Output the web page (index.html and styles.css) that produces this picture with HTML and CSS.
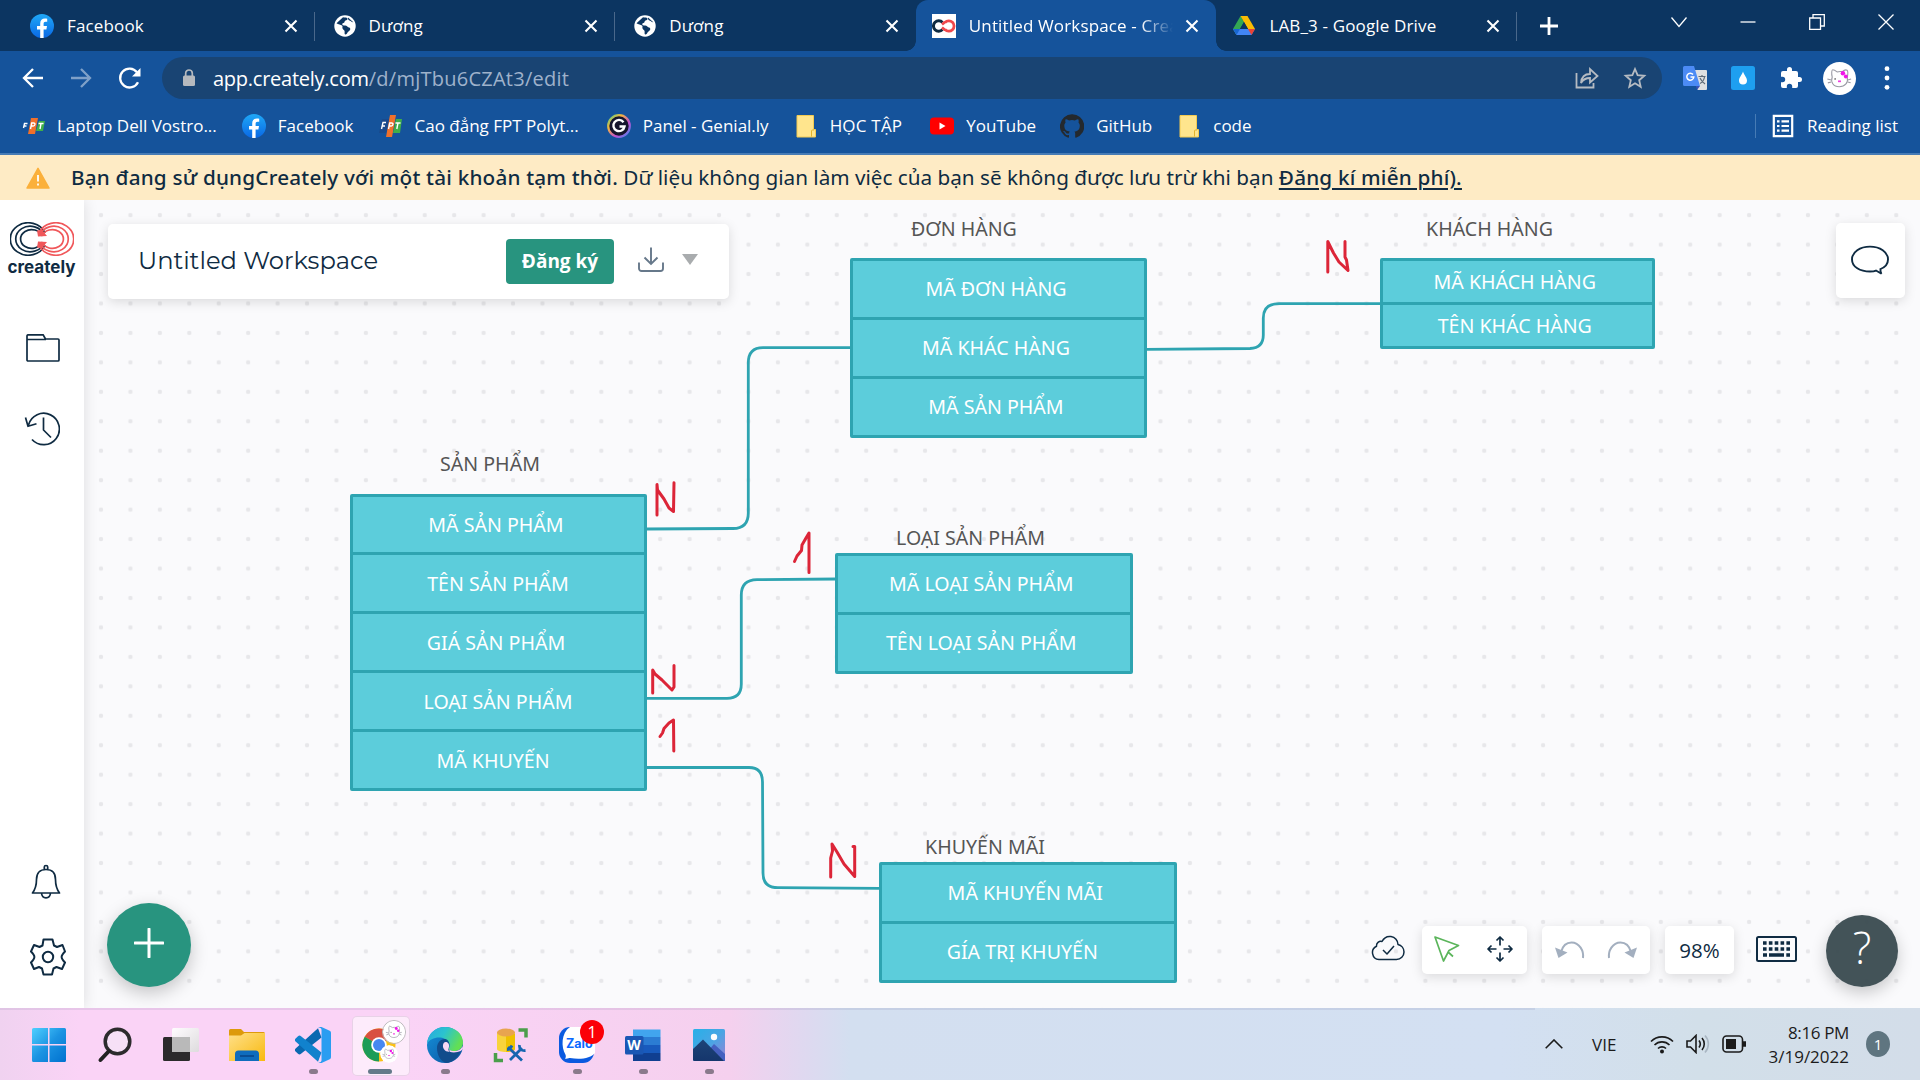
FILE: index.html
```html
<!DOCTYPE html>
<html lang="vi">
<head>
<meta charset="utf-8">
<title>Untitled Workspace - Creately</title>
<link rel="stylesheet" href="styles.css">
</head>
<body>
<svg class="defs" width="0" height="0">
  <defs>
    <linearGradient id="fbg" x1="0" y1="0" x2="0" y2="1"><stop offset="0" stop-color="#1fa8f7"/><stop offset="1" stop-color="#0a68e4"/></linearGradient>
    <linearGradient id="wing" x1="0" y1="0" x2="1" y2="1"><stop offset="0" stop-color="#4fd0ff"/><stop offset=".5" stop-color="#1b93e2"/><stop offset="1" stop-color="#0071cf"/></linearGradient>
    <linearGradient id="rainbow" x1="0" y1="0" x2="1" y2="1"><stop offset="0" stop-color="#4fd08a"/><stop offset=".3" stop-color="#f3b63c"/><stop offset=".65" stop-color="#c04fd0"/><stop offset="1" stop-color="#3e8ef0"/></linearGradient>
    <linearGradient id="foldg" x1="0" y1="0" x2="1" y2="1"><stop offset="0" stop-color="#ffe08a"/><stop offset="1" stop-color="#f8b90f"/></linearGradient>
    <linearGradient id="edgeTop" x1="0" y1="0" x2="1" y2=".4"><stop offset="0" stop-color="#2aa7e0"/><stop offset=".5" stop-color="#2bc3cf"/><stop offset="1" stop-color="#62df55"/></linearGradient>
    <linearGradient id="edgeLow" x1="0" y1="0" x2="1" y2="1"><stop offset="0" stop-color="#1593dc"/><stop offset="1" stop-color="#0c4f9c"/></linearGradient>
    <linearGradient id="skyg" x1="0" y1="0" x2="1" y2="1"><stop offset="0" stop-color="#27b0e8"/><stop offset=".5" stop-color="#4aa5e4"/><stop offset="1" stop-color="#9a7fd6"/></linearGradient>
    <linearGradient id="hillg" x1="0" y1="0" x2="0" y2="1"><stop offset="0" stop-color="#1d4478"/><stop offset="1" stop-color="#15366c"/></linearGradient>
    <linearGradient id="tvg" x1="0" y1="0" x2="1" y2="1"><stop offset="0" stop-color="#fff"/><stop offset="1" stop-color="#dcdcdc"/></linearGradient>
    <symbol id="i-close" viewBox="0 0 14 14"><path d="M1.500 1.500l11 11M12.500 1.500l-11 11" stroke="#fff" stroke-width="2.100" fill="none"/></symbol>
    <symbol id="i-fb" viewBox="0 0 24 24"><circle cx="12" cy="12" r="12" fill="url(#fbg)"/><path d="M10.200 24v-8.400H7V12h3.200V9.400c0-3.200 1.900-4.900 4.700-4.900.9 0 1.800.1 2.300.2v3.100h-1.600c-1.500 0-2 .9-2 1.900V12h3.400l-.6 3.600h-2.800V24z" fill="#fff"/></symbol>
    <symbol id="i-globe" viewBox="0 0 22 22"><circle cx="11" cy="11" r="10.700" fill="#fff"/><path d="M9 2.200c1 .2 4 .2 4.500 1.200.4 1-.8 1.600-2 2.100-1.300.6-.6 2.300-2.200 2.600-1.500.3-1.300 1.800-.3 2.200 1 .3 3.300-.1 4.300 1.100 1 1.100 3 .9 3 2.500s-1.800 2.100-2.400 3.200c-.6 1.200-1.500 2.600-2.700 2.400-1-.2-.4-2-.6-3.200-.2-1.400-2-1.700-2.200-3.200-.2-1.300.6-1.600-.4-2.500-1.200-1-3.700-.9-5.500-2.300M14 2.500c-.4 1.500.4 3 2 3.300 1 .2 1.500 1.700 3.300 1.500" fill="#0c3561"/></symbol>
    <symbol id="i-folder" viewBox="0 0 24 24"><path d="M3 1.500h16.500v14h2V23H3z" fill="#ffe58d" stroke="#f3cb52" stroke-width="1"/><path d="M17.500 22.500v-5.500a1 1 0 0 1 1-1h1.500" fill="none" stroke="#e3b32c" stroke-width="1"/></symbol>
    <symbol id="i-kitty" viewBox="0 0 34 34"><circle cx="17" cy="17" r="17" fill="#fff"/><g fill="none" stroke="#9a9aa4" stroke-width="1.100"><path d="M9.500 15.500c-1-4-.5-7.500.5-7.500 1.500 0 3 1 4.500 2.200 2-.5 4-.5 5.500-.2 1.500-1.500 3.500-2.300 4.800-1.500 1.200 1 .7 5 .2 7.500 1.200 5-2 9.500-8.300 9.500s-9-5-7.200-10z"/><path d="M4.500 17.500l4 1M5 21.500l3.500-1M29 17.500l-3.500 1M28.500 21.500l-3-1"/></g><circle cx="20.500" cy="11.500" r="2.300" fill="#f015e8"/><circle cx="23.500" cy="15" r="2" fill="#f015e8"/><rect x="15.500" y="19" width="3" height="1.800" fill="#f03ae0"/><circle cx="12.500" cy="17.500" r=".9" fill="#777"/></symbol>
  </defs>
</svg>

<header class="tabstrip">
  <div class="tab sep"><svg class="fav"><use href="#i-fb"/></svg><span class="tab-title">Facebook</span><svg class="x"><use href="#i-close"/></svg></div>
  <div class="tab sep"><svg class="fav globe"><use href="#i-globe"/></svg><span class="tab-title">Dương</span><svg class="x"><use href="#i-close"/></svg></div>
  <div class="tab"><svg class="fav globe"><use href="#i-globe"/></svg><span class="tab-title">Dương</span><svg class="x"><use href="#i-close"/></svg></div>
  <div class="tab active">
    <svg class="fav" viewBox="0 0 24 24"><rect width="24" height="24" fill="#fff"/><path d="M10.500 8.500A5.200 5.200 0 1 0 10.500 15.500" fill="none" stroke="#0f2b42" stroke-width="3"/><path d="M13 8.500a5.200 5.200 0 1 1 0 7M10 10.500l3-2.500M10 13.500l3 2.500" fill="none" stroke="#f0484c" stroke-width="2.800"/></svg>
    <span class="tab-title fade">Untitled Workspace - Creately</span><svg class="x"><use href="#i-close"/></svg></div>
  <div class="tab sep"><svg class="fav" viewBox="0 0 24 24"><path d="M8.500 2h7L12 8z" fill="#188038"/><path d="M8.500 2L1 15l3.500 6L12 8z" fill="#34a853"/><path d="M15.500 2h-7L16 15h7z" fill="#fbbc04"/><path d="M1 15h22l-3.500 6H4.500z" fill="#4285f4"/><path d="M16 15h7l-3.500 6z" fill="#ea4335"/><path d="M1 15h7l-3.500 6z" fill="#1967d2"/><path d="M12 8l4 7H8z" fill="#0c3561"/></svg><span class="tab-title">LAB_3 - Google Drive</span><svg class="x"><use href="#i-close"/></svg></div>
  <svg class="newtab" viewBox="0 0 18 18"><path d="M9 0v18M0 9h18" stroke="#fff" stroke-width="2.800"/></svg>
  <div class="winctl">
    <svg viewBox="0 0 16 16"><path d="M.5 3.500L8 12.500l7.500-9"/></svg>
    <svg viewBox="0 0 16 16"><path d="M.5 8h15"/></svg>
    <svg viewBox="0 0 16 16"><path d="M.7 4h10.800v11.300H.7zM4 4V.7h11.300V12h-3.600"/></svg>
    <svg viewBox="0 0 16 16"><path d="M.5.5l15 15M15.500.5l-15 15"/></svg>
  </div>
</header>

<section class="browserbar">
  <div class="toolbar">
    <svg class="nav" viewBox="0 0 24 24"><path d="M22 12H3M12 3l-9 9 9 9"/></svg>
    <svg class="nav dim" viewBox="0 0 24 24"><path d="M2 12h19M12 3l9 9-9 9"/></svg>
    <svg class="nav reload" viewBox="0 0 24 24"><path d="M20 16.200A9.400 9.400 0 1 1 19 6.300"/><path d="M22.500 2v8.500H14z" fill="#fff" stroke="none"/></svg>
    <div class="omnibox">
      <svg class="lock" viewBox="0 0 14 18"><rect x="1" y="6.500" width="12" height="10.500" rx="1.500" fill="#b5b9be"/><path d="M3.700 7V4.300a3.300 3.300 0 0 1 6.600 0V7" fill="none" stroke="#b5b9be" stroke-width="1.700"/></svg>
      <span class="url"><b>app.creately.com</b>/d/mjTbu6CZAt3/edit</span>
      <svg class="omni-icon" viewBox="0 0 24 24"><path d="M1.500 7v14.500h17V17M6 17c.5-6 3.500-9 9-9V3l7.500 7L15 16.500V12c-4 0-7 1.500-9 5z"/></svg>
      <svg class="omni-icon" viewBox="0 0 24 24"><path d="M12 3l2.600 6.200 6.700.6-5.100 4.400 1.500 6.600-5.700-3.500-5.700 3.500 1.500-6.600-5.100-4.400 6.700-.6z"/></svg>
    </div>
    <svg class="ext" viewBox="0 0 24 24"><path d="M11 4h12a1 1 0 0 1 1 1v18a1 1 0 0 1-1 1h-8.500z" fill="#dfe0e2"/><path d="M0 1.500A1.500 1.500 0 0 1 1.500 0H11l6 20H1.500A1.500 1.500 0 0 1 0 18.500z" fill="#4c8bf5"/><path d="M13 20h4l-3 4z" fill="#3a52b8"/><path d="M10 8.400A3.500 3.500 0 1 0 10.800 11H7.500" fill="none" stroke="#fff" stroke-width="1.500"/><path d="M15.500 10.500h7M19 9v1.500M21.500 11c-.5 3-2.500 5.500-4.500 6.500M17 12c1 2.500 2.500 4 5 6" fill="none" stroke="#5f6b78" stroke-width="1.200"/></svg>
    <svg class="ext" viewBox="0 0 24 24"><rect width="24" height="24" rx="2.500" fill="#1e9ff0"/><path d="M12 5.500c1 3.500 4 6 4 9a4 4 0 0 1-8 0c0-3 3-5.500 4-9z" fill="#fff"/></svg>
    <svg class="ext" viewBox="0 0 24 24"><path d="M20.500 11H19V7a2 2 0 0 0-2-2h-4V3.500a2.500 2.500 0 0 0-5 0V5H4a2 2 0 0 0-2 2v3.800h1.500a2.700 2.700 0 0 1 0 5.400H2V20a2 2 0 0 0 2 2h3.800v-1.500a2.700 2.700 0 0 1 5.400 0V22H17a2 2 0 0 0 2-2v-4h1.500a2.500 2.500 0 0 0 0-5z" fill="#fff"/></svg>
    <svg class="avatar"><use href="#i-kitty"/></svg>
    <svg class="menu" viewBox="0 0 6 24"><circle cx="3" cy="2.700" r="2.400"/><circle cx="3" cy="12" r="2.400"/><circle cx="3" cy="21.300" r="2.400"/></svg>
  </div>
  <nav class="bookmarks">
    <a><svg viewBox="0 0 24 24"><path d="M3 7h6l-2 11H0z" fill="#12529c"/><path d="M10 4h7l-3 16H7z" fill="#f0702a"/><path d="M18 7h6l-2 10h-7z" fill="#3fae49"/><path d="M2.500 14l1-4.500h3M3 12h2.500M9.500 15l1.200-6h2c2 0 1.500 3-.5 3h-2M17.500 9.500h5M20 9.500L19 15" stroke="#fff" stroke-width="1.400" fill="none"/></svg><span>Laptop Dell Vostro...</span></a>
    <a><svg><use href="#i-fb"/></svg><span>Facebook</span></a>
    <a><svg viewBox="0 0 24 24"><path d="M3 5h7L7 19H0z" fill="#1a4a8c"/><path d="M11 1h6l-4 22H7z" fill="#f0702a"/><path d="M17 5h6l-2 14h-7z" fill="#3fae49"/><path d="M2.500 15l1.500-6.500h3M3 12h3M9.500 15l1.200-6h2c2 0 1.500 3-.5 3h-2M16.500 9h5M19 9l-1.200 6" stroke="#fff" stroke-width="1.400" fill="none"/></svg><span>Cao đẳng FPT Polyt...</span></a>
    <a class="genially"><svg viewBox="0 0 24 24"><circle cx="12" cy="12" r="10.800" fill="#15142c" stroke="url(#rainbow)" stroke-width="2.200"/><path d="M16.500 8.200A5.600 5.600 0 1 0 17.500 12.500H12.500" fill="none" stroke="#fff" stroke-width="2.400"/></svg><span>Panel - Genial.ly</span></a>
    <a class="study"><svg><use href="#i-folder"/></svg><span>HỌC TẬP</span></a>
    <a><svg viewBox="0 0 24 24"><rect y="3.500" width="24" height="17" rx="4" fill="#f00"/><path d="M9.500 8.500v7l6-3.500z" fill="#fff"/></svg><span>YouTube</span></a>
    <a class="github"><svg viewBox="0 0 24 24"><path d="M12 .3a12 12 0 0 0-3.800 23.400c.6.1.8-.3.8-.6v-2c-3.300.7-4-1.600-4-1.600-.6-1.400-1.400-1.800-1.400-1.800-1-.7.1-.7.1-.7 1.200 0 1.900 1.200 1.900 1.200 1 1.800 2.800 1.300 3.500 1 0-.8.4-1.300.7-1.600-2.700-.3-5.500-1.300-5.500-6 0-1.200.5-2.300 1.300-3.100-.2-.4-.6-1.600 0-3.200 0 0 1-.3 3.400 1.200a11.500 11.500 0 0 1 6 0c2.300-1.500 3.300-1.200 3.300-1.200.7 1.600.3 2.800.2 3.200.8.8 1.300 1.900 1.300 3.200 0 4.600-2.800 5.600-5.500 5.900.5.400.9 1 .9 2.200v3.300c0 .3.1.7.8.6A12 12 0 0 0 12 .3" fill="#24292e"/></svg><span>GitHub</span></a>
    <a><svg><use href="#i-folder"/></svg><span>code</span></a>
    <a class="reading"><svg viewBox="0 0 24 24"><path d="M2.800 1.800h18.400v20.400H2.800z" fill="none" stroke="#fff" stroke-width="2.200"/><path d="M6 7.300h2.500M10.500 7.300H18M6 12h2.500M10.500 12H18M6 16.700h2.500M10.500 16.700H18" stroke="#fff" stroke-width="2.200"/></svg><span>Reading list</span></a>
  </nav>
</section>

<div class="banner">
  <svg viewBox="0 0 24 22"><path d="M12 1.300L23 21H1z" fill="#fbb03b" stroke="#fbb03b" stroke-width="1.500" stroke-linejoin="round"/><path d="M12 8v6.500M12 16.500v2" stroke="#fff" stroke-width="1.800"/></svg>
  <p><b>Bạn đang sử dụngCreately với một tài khoản tạm thời.</b> Dữ liệu không gian làm việc của bạn sẽ không được lưu trừ khi bạn <u>Đăng kí miễn phí).</u></p>
</div>

<main class="workspace">
  <aside class="sidebar">
    <div class="logo">
      <svg viewBox="0 0 64 34"><g fill="none" stroke="#0f2b42" stroke-width="1.700"><path d="M35 11A18 16.200 0 1 0 35 23"/><path d="M34 13A14.500 12.800 0 1 0 34 21"/><path d="M32 14A11 9.400 0 1 0 32 20"/></g><g fill="none" stroke="#f0575a" stroke-width="1.700"><path d="M29 11A18 16.200 0 1 1 29 23"/><path d="M30 13A14.500 12.800 0 1 1 30 21"/><path d="M32 14A11 9.400 0 1 1 32 20"/></g><path d="M27 8.500l1 6 9-.5-5-6zM27 25.500l1-6 9 .5-5 6z" fill="#f0575a"/></svg>
      <span>creately</span>
    </div>
    <svg class="s-folder" viewBox="0 0 34 28"><path d="M1 5.500V2a1.200 1.200 0 0 1 1.200-1.200h15L19.500 5H32a1 1 0 0 1 1 1v20a1 1 0 0 1-1 1H2a1 1 0 0 1-1-1zM1 5.500h19"/></svg>
    <svg class="s-history" viewBox="0 0 36 34"><path d="M4.500 13A15.700 15.700 0 1 1 8 27.500M1.500 5.500L4 14.300l8.500-2.500M19.500 5.500V18l7.500 7.500"/></svg>
    <svg class="s-bell" viewBox="0 0 30 36"><path d="M1.500 29c3-4 4-8 4-13.500C5.500 9 9 5.500 15 5.500S24.500 9 24.500 15.500c0 5.500 1 9.500 4 13.500zM13.300 5.500V3c0-2 3.400-2 3.400 0v2.500M10.500 29c.5 6.500 8.500 6.500 9 0"/></svg>
    <svg class="s-gear" viewBox="0 0 36 38"><path d="M13.500 1.500h9l1.500 6 3 1.500 5.500-2L35 13.500c-4.500 4.500-4.500 6.500 0 11L32 31l-5.500-2-3 1.500-1.500 6h-8.500l-1.500-6-3-1.500L4 31 1 24.500c4.500-4.500 4.500-6.500 0-11L4 7l5.500 2 3-1.500z"/><circle cx="18" cy="19" r="5.200"/></svg>
  </aside>

  <div class="canvas">
    <svg class="layer" viewBox="84 200 1836 808">
      <defs><pattern id="dots" x="86.300" y="200.400" width="29.430" height="29.450" patternUnits="userSpaceOnUse"><circle cx="14.700" cy="14.700" r="2.200" fill="#e7e7ea"/></pattern></defs>
      <rect x="84" y="200" width="1836" height="808" fill="url(#dots)"/>
      <g class="wires">
        <path d="M646 529L733 528.500Q748.300 528.500 748.300 513V363Q748.300 347.700 763 347.700H852"/>
        <path d="M646 698.300H727Q741.300 698.300 741.300 684V595Q741.300 580 757 579.700L837 579"/>
        <path d="M644 767.500H749Q762.500 767.500 762.500 782L763 873Q763 887.700 778 887.700L880 888.300"/>
        <path d="M1146 349.300L1250 348.500Q1263.300 348 1263.300 335V318Q1263.300 303.600 1279 303.600H1380"/>
      </g>
    </svg>

    <h4 class="label l-don">ĐƠN HÀNG</h4>
    <ul class="node n-don"><li>MÃ ĐƠN HÀNG</li><li>MÃ KHÁC HÀNG</li><li>MÃ SẢN PHẨM</li></ul>
    <h4 class="label l-khach">KHÁCH HÀNG</h4>
    <ul class="node n-khach"><li>MÃ KHÁCH HÀNG</li><li>TÊN KHÁC HÀNG</li></ul>
    <h4 class="label l-san">SẢN PHẨM</h4>
    <ul class="node n-san"><li>MÃ SẢN PHẨM</li><li class="mid">TÊN SẢN PHẨM</li><li>GIÁ SẢN PHẨM</li><li class="mid">LOẠI SẢN PHẨM</li><li class="trail">MÃ KHUYẾN</li></ul>
    <h4 class="label l-loai">LOẠI SẢN PHẨM</h4>
    <ul class="node n-loai"><li>MÃ LOẠI SẢN PHẨM</li><li>TÊN LOẠI SẢN PHẨM</li></ul>
    <h4 class="label l-khuyen">KHUYẾN MÃI</h4>
    <ul class="node n-khuyen"><li>MÃ KHUYẾN MÃI</li><li class="trail">GÍA TRỊ KHUYẾN</li></ul>

    <!-- freehand ink strokes -->
    <svg class="layer ink" viewBox="84 200 1836 808">
      <polyline points="657,515 657,484.500 657.500,490 664,499 669,508 673.500,511.500 674,482.700"/>
      <polyline points="794.500,561.500 797,556 801.500,550.500 802,545 806,538 809,533 809,572.500"/>
      <polyline points="652.700,693 652.700,670 655,674 662,680 672,690 674,687 674,665.500"/>
      <polyline points="660,736.500 662.500,733 664,728.500 669,723 673.500,720 673.800,751"/>
      <polyline points="1327.800,272 1327.800,241.500 1330,246 1333.500,253 1339,262 1348,270.500 1346.500,260 1345,257 1345,241.500"/>
      <polyline points="830.700,877 830.700,858 832.500,851 832,844 837,852 844,864 854.700,876.500 854.700,846.500 853,846.500"/>
    </svg>

    <div class="card title-card">
      <span class="ws-title">Untitled Workspace</span>
      <button class="signup">Đăng ký</button>
      <svg class="download" viewBox="0 0 26 25"><path d="M13 .5v16M6.500 10.500l6.500 6.500 6.500-6.500M1 15.500v6A2.500 2.500 0 0 0 3.500 24h19a2.500 2.500 0 0 0 2.500-2.500v-6"/></svg>
      <svg class="caret" viewBox="0 0 16 11"><path d="M0 0h16L8 11z" fill="#a9acae"/></svg>
    </div>
    <div class="card comment-card"><svg viewBox="0 0 38 30"><path d="M29.500 25.500C34 23.500 37 20 37 15.300 37 7.500 29 1.800 19 1.800S1 7.500 1 15.300 9 28.200 19 28.200c2 0 4.500-.3 6-1l5.500 3.300c-1-1.500-1.200-3-1-5z" transform="scale(1 .94)"/></svg></div>
    <button class="fab"><svg viewBox="0 0 30 30"><path d="M15 1v28M1 15h28"/></svg></button>

    <div class="controls">
      <svg class="cloud" viewBox="0 0 34 26"><path d="M8 24.500a7 7 0 0 1-2.500-13.300c-.3-3 2.500-5.500 5.500-4.700C13 2.500 16.500 1 20 1.500c4 .5 7 4 7 8 3.500.8 6 4 6 7.500 0 4-3.300 7.500-7.500 7.500zM12 15l4 4 7-8"/></svg>
      <div class="card tools">
        <svg class="cursor" viewBox="0 0 26 26"><path d="M1 1l23.500 8.500L15 14.500 9.500 25zM13.500 15.500l5.500 5"/></svg>
        <svg class="move" viewBox="0 0 26 26"><path d="M13 9.500V1M9.500 4.500L13 1l3.500 3.500M13 16.500V25M9.500 21.500L13 25l3.500-3.500M9.500 13H1M4.500 9.500L1 13l3.500 3.500M16.500 13H25M21.500 9.500L25 13l-3.500 3.500"/></svg>
      </div>
      <div class="card history">
        <svg viewBox="0 0 30 18"><path d="M28 17c1-7-3.500-15.500-11.500-15.500C11 1.500 7.500 5.500 6 11"/><path class="fill" d="M0 6.500l12.500 5L3.500 17z"/></svg>
        <svg viewBox="0 0 30 18"><path d="M2 17C1 10 5.500 1.500 13.500 1.500 19 1.500 22.500 5.500 24 11"/><path class="fill" d="M30 6.500l-12.500 5 9 5.500z"/></svg>
      </div>
      <div class="card zoomlevel">98%</div>
      <svg class="kbd" viewBox="0 0 41 26"><rect x="1" y="1" width="39" height="24" rx="1.500" fill="none" stroke="#0f2b42" stroke-width="2"/><g stroke="#0f2b42" stroke-width="3.600"><path d="M7 7h27M7 13h27" stroke-dasharray="3.600 2.250"/><path d="M7 19h4M13 19h15M30.300 19H34"/></g></svg>
      <div class="help"><span>?</span></div>
    </div>
  </div>
</main>

<footer class="taskbar">
  <div class="apps">
    <div class="app"><svg viewBox="0 0 36 36"><path d="M1 2.500A1.500 1.500 0 0 1 2.500 1H17v16H1zM18.500 1h15A1.500 1.500 0 0 1 35 2.500V17H18.500zM1 18.500h16V35H2.500A1.500 1.500 0 0 1 1 33.500zM18.500 18.500H35v15a1.500 1.500 0 0 1-1.500 1.500h-15z" fill="url(#wing)"/></svg></div>
    <div class="app"><svg viewBox="0 0 36 36"><circle cx="20.500" cy="14.500" r="12.300" fill="#f6e0f6" stroke="#2c2b2d" stroke-width="3.500"/><path d="M12 24l-8.500 9" stroke="#222" stroke-width="4" stroke-linecap="round"/></svg></div>
    <div class="app"><svg viewBox="0 0 36 36"><rect y="10" width="27" height="24" rx="1.500" fill="#2b2a2b"/><rect x="9" y="1" width="27" height="24" rx="1.500" fill="url(#tvg)" opacity=".94"/><path d="M9 10h18v15H9z" fill="#b9b9b9"/></svg></div>
    <div class="app"><svg viewBox="0 0 36 36"><path d="M0 3.500A1.500 1.500 0 0 1 1.500 2H12l3 3h19.500A1.500 1.500 0 0 1 36 6.500V12H0z" fill="#dd9a0b"/><path d="M0 8.500h12L15.500 6H36v28H0z" fill="url(#foldg)"/><path d="M6 34V27a3.500 3.500 0 0 1 3.500-3.500h17A3.500 3.500 0 0 1 30 27v7z" fill="#0f6cbd"/><path d="M11 29h14" stroke="#0a4a90" stroke-width="1.800"/></svg></div>
    <div class="app run"><svg viewBox="0 0 36 36"><path d="M.6 21.500L23 1.200l3.500 9.300L6 26.800a2.200 2.200 0 0 1-3 0L.6 24.600a2.200 2.200 0 0 1 0-3.100z" fill="#0a68b0"/><path d="M.6 14.500L23 34.800l3.500-9.300L6 9.200a2.200 2.200 0 0 0-3 0L.6 11.400a2.200 2.200 0 0 0 0 3.100z" fill="#1182cd"/><path d="M26.500 0l8.200 3.800A2.200 2.200 0 0 1 36 5.800v24.400a2.200 2.200 0 0 1-1.300 2L26.500 36c-1.500.3-2.600-.2-3.500-1.200 1.500 1.200 3.500.2 3.500-1.600V2.800C26.500 1 24.500 0 23 1.200c.9-1 2-1.500 3.500-1.200z" fill="#2a9df1"/></svg></div>
    <div class="app run current"><svg viewBox="0 0 36 36"><circle cx="18" cy="18" r="16.500" fill="#fbc116"/><path d="M18 18L3.700 9.700A16.500 16.500 0 0 1 32.300 9.700z" fill="#d94f41"/><path d="M18 18L3.700 9.700A16.500 16.500 0 0 0 18 34.500z" fill="#1c9c58"/><circle cx="18" cy="18" r="7.800" fill="#fff"/><circle cx="18" cy="18" r="6" fill="#4688f1"/></svg><svg class="kit a"><use href="#i-kitty"/></svg><svg class="kit b"><use href="#i-kitty"/></svg></div>
    <div class="app run"><svg viewBox="0 0 36 36"><circle cx="18" cy="18" r="18" fill="url(#edgeLow)"/><path d="M0 17C1 6 8.500 0 18 0c10.500 0 18 7 18 15.500 0 6-4.500 8.500-9 8.500-4 0-6-1.500-5-3 1.500-2 1-6.500-4-9C12 9 3 11 0 17z" fill="url(#edgeTop)"/><path d="M10 21c0-5.500 4-9.500 8.500-9 3 1 4.500 4 3.500 8-1 3 1 5 5 5 3 0 5.500-1 6.700-1.500C31 31 25 36 19 36 13 34 10 27.500 10 21z" fill="#114c8c"/><path d="M16 18c.5-3 3-4 5.500-1.500.9 1.500.7 3.500.2 4.500-.8 1.800 0 3 .8 3.700C18 25 15.500 21.500 16 18z" fill="#f9d8f5"/><path d="M22 21c-.6 1.500 1.500 3 5 3 4.500 0 7.500-2 8.500-5l.5 3-2.300 2c-3 1.500-8 2-11 .8z" fill="#f9d3f3"/></svg></div>
    <div class="app"><svg viewBox="0 0 36 36"><path d="M4 5v17c0 4 18 4 18 0V5z" fill="#f8d33c"/><path d="M13 7h9v15c0 1.500-4 3-9 3z" fill="#efc100"/><ellipse cx="13" cy="5.500" rx="9" ry="4" fill="#e8a44f"/><path d="M25.500 3H33v7.500M10 33.500H2.500V26" fill="none" stroke="#4b9e4b" stroke-width="3.500"/><path d="M15 20l14 13.500M17 33l12-12M14 22.500c2 0 4-2 5-4M26.500 18c-.5 4 2 6 6 5.500" fill="none" stroke="#1565b0" stroke-width="2.800"/></svg></div>
    <div class="app run"><svg viewBox="0 0 36 36"><rect width="35" height="36" rx="11" fill="#0a5ae0"/><path d="M11 0h17a8 8 0 0 1 8 8v18c-4 5-14 7-25 5-1.500-.3-3 .8-5 .8 1-1.500 1-2.500.5-4C2 20 2 6 11 0z" fill="#fff"/><text x="7" y="21" class="zalo">Zalo</text></svg><span class="badge">1</span></div>
    <div class="app run"><svg viewBox="0 0 36 36"><path d="M8 2.500h27.500V10H8z" fill="#41a5ee"/><path d="M8 10h27.500v8H8z" fill="#2b7cd3"/><path d="M8 18h27.500v8H8z" fill="#185abd"/><path d="M8 26h27.500v8H8z" fill="#103f91"/><rect y="9" width="18.500" height="18.500" rx="1.500" fill="#1a57b4"/><text x="2.300" y="23.300" class="word">W</text></svg></div>
    <div class="app run"><svg viewBox="0 0 36 36"><rect x="2" y="2" width="32" height="32" rx="1.500" fill="url(#skyg)"/><path d="M16 25l7-8 11 10v7H16z" fill="#4560c0"/><path d="M2 22L12 12.500 33 34H3.500A1.500 1.500 0 0 1 2 32.500z" fill="url(#hillg)"/><circle cx="23" cy="10" r="3.200" fill="#fdfdfd"/></svg></div>
  </div>
  <div class="tray">
    <svg class="up" viewBox="0 0 18 10"><path d="M.7 9.300L9 1l8.300 8.300"/></svg>
    <span class="lang">VIE</span>
    <svg class="ti" viewBox="0 0 24 20"><path d="M1 7.500a15.500 15.500 0 0 1 22 0M4.500 11a10.600 10.600 0 0 1 15 0M8 14.500a5.700 5.700 0 0 1 8 0"/><circle cx="12" cy="17.500" r="2" fill="#1b1b1b" stroke="none"/></svg>
    <svg class="ti" viewBox="0 0 24 20"><path d="M1 7h3.500L10 1.500v17L4.500 13H1zM13 6.500c1.500 2 1.500 5 0 7M16 4c3 3.500 3 8.500 0 12"/><path d="M19 1.500c4.500 5 4.500 12 0 17" stroke="#a9b6c2"/></svg>
    <svg class="ti" viewBox="0 0 24 20"><rect x="1" y="2" width="19.500" height="16" rx="3.500"/><rect x="4" y="5" width="10" height="10" fill="#1b1b1b" stroke="none"/><path d="M21.500 8v4h2V8z" fill="#1b1b1b"/></svg>
    <div class="clock"><span class="time">8:16 PM</span><span>3/19/2022</span></div>
    <span class="notif">1</span>
  </div>
</footer>
</body>
</html>
```
FILE: styles.css
```css
* { box-sizing: border-box; }
body {
  margin: 0;
  width: 1920px;
  height: 1080px;
  overflow: hidden;
  display: grid;
  grid-template-rows: 51px 104px 45px 808px 72px;
  font-family: "Open Sans", "Noto Sans", sans-serif;
  color: #0f2b42;
  background: #fafafc;
}
svg { display: block; flex: none; }
.defs { position: absolute; }
button { border: 0; padding: 0; font: inherit; }

/* tab strip */
.tabstrip { display: flex; background: #0c3561; padding-left: 14px; color: #fff; }
.tab { position: relative; width: 300.600px; height: 51px; display: flex; align-items: center; padding: 0 16px 0 16px; }
.tab.sep::after { content: ""; position: absolute; right: 0; top: 12px; height: 29px; width: 1px; background: #4a688b; }
.fav { width: 24px; height: 24px; margin-right: 13px; }
.fav.globe { width: 22px; height: 22px; margin: 0 13px 0 3px; }
.tab-title { flex: 1; font-size: 17px; letter-spacing: .15px; white-space: nowrap; overflow: hidden; }
.x { width: 14px; height: 14px; margin: 0 1px 0 12px; }
.tab.active { background: #15539b; border-radius: 12px 12px 0 0; }
.tab.active::before, .tab.active::after { content: ""; position: absolute; bottom: 0; width: 10px; height: 10px; }
.tab.active::before { left: -10px; background: radial-gradient(circle at 0 0, transparent 9.500px, #15539b 10px); }
.tab.active::after { right: -10px; background: radial-gradient(circle at 100% 0, transparent 9.500px, #15539b 10px); }
.fade { -webkit-mask-image: linear-gradient(90deg, #000 84%, transparent); mask-image: linear-gradient(90deg, #000 84%, transparent); }
.newtab { width: 18px; height: 18px; margin: 17px 0 0 23px; }
.winctl { margin-left: auto; display: flex; gap: 53px; padding: 14px 26px 0 0; }
.winctl svg { width: 16px; height: 16px; fill: none; stroke: #fff; stroke-width: 1.300; }

/* toolbar */
.browserbar { background: #15539b; border-bottom: 2px solid #467bb5; }
.toolbar { height: 54px; display: flex; align-items: center; padding-left: 21px; }
.nav { width: 24px; height: 24px; margin-right: 24px; fill: none; stroke: #fff; stroke-width: 2.300; }
.nav.dim { opacity: .45; }
.nav.reload { margin: 0 23px 0 1px; }
.omnibox { width: 1500px; height: 42px; margin-right: 21px; margin-left: -3px; border-radius: 21px; background: #194473; display: flex; align-items: center; padding: 0 15px 0 20px; }
.lock { width: 14px; height: 18px; margin-right: 17px; }
.url { flex: 1; font-size: 20px; letter-spacing: .25px; color: #9fb2cb; }
.url b { font-weight: 400; letter-spacing: -.25px; color: #fff; }
.omni-icon { width: 24px; height: 24px; margin-left: 24px; fill: none; stroke: #b5bbc2; stroke-width: 1.800; }
.ext { width: 24px; height: 24px; margin-right: 24px; }
.avatar { width: 33px; height: 33px; margin: 0 28px 0 -4px; }
.menu { width: 6px; height: 24px; fill: #fff; }
.bookmarks { height: 42px; display: flex; align-items: center; gap: 25px; padding: 0 22px 0 21px; color: #fff; font-size: 17px; white-space: nowrap; }
.bookmarks a { display: flex; align-items: center; gap: 12px; }
.bookmarks span { padding-bottom: 2px; }
.bookmarks svg { width: 24px; height: 24px; }
.bookmarks .genially { margin-left: 3px; }
.bookmarks .study { margin-right: 3px; letter-spacing: .2px; }
.bookmarks .github { margin-left: -1px; }
.bookmarks .reading { margin-left: auto; border-left: 1px solid #467bb5; padding-left: 15px; height: 24px; }

.banner { display: flex; align-items: center; padding-left: 26px; gap: 21px; background: #feebc5; font: 20.700px "Noto Sans", sans-serif; white-space: nowrap; }
.banner svg { width: 24px; height: 22px; }
.banner p { margin: 0; padding-bottom: 2px; }
.banner b, .banner u { font-weight: 500; letter-spacing: .2px; }
.banner u { text-underline-offset: 3px; text-decoration-thickness: 2px; }

/* workspace */
.workspace { display: grid; grid-template-columns: 84px 1836px; }
.sidebar { position: relative; z-index: 1; background: #fff; box-shadow: 0 0 14px rgba(0,0,0,.12); display: flex; flex-direction: column; padding-top: 22px; clip-path: inset(0 -20px 0 0); }
.sidebar > svg { fill: none; stroke: #0f2b42; stroke-width: 1.700; stroke-linejoin: round; }
.logo { height: 112px; display: flex; flex-direction: column; align-items: center; padding-right: 1px; font: 700 17px/22px "Inter", sans-serif; }
.logo svg { width: 64px; height: 34px; }
.s-folder { width: 34px; height: 28px; margin-left: 26px; }
.s-history { width: 36px; height: 34px; margin: 50px 0 0 24px; }
.s-bell { width: 30px; height: 36px; margin: auto 0 38px 31px; }
.sidebar .s-gear { width: 36px; height: 38px; margin: 0 0 32px 30px; stroke-width: 2; }

.canvas { position: relative; overflow: hidden; background: #fafafc; }
.layer { position: absolute; inset: 0; width: 1836px; height: 808px; }
.wires { fill: none; stroke: #2ea4b1; stroke-width: 2.800; }
.ink { fill: none; stroke: #dc2538; stroke-width: 3; stroke-linecap: round; stroke-linejoin: round; }
.label { position: absolute; margin: 0; font: 400 19.600px/28px "Noto Sans", sans-serif; color: #555; white-space: nowrap; }
.node { position: absolute; margin: 0; padding: 0; list-style: none; border: 3px solid #2ea4b1; background: #5ccddb; display: flex; flex-direction: column; font: 400 19.600px/28px "Noto Sans", sans-serif; color: #fff; border-radius: 2px; }
.node li { flex: 1; display: flex; align-items: center; justify-content: center; padding: 1px 5px 0 0; white-space: nowrap; }
.node li.mid { padding-right: 1px; }
.node li.trail { padding-right: 11px; }
.node li + li { border-top: 3px solid #2ea4b1; }
.l-don { left: 827px; top: 15px; }
.n-don { left: 766px; top: 58px; width: 297px; height: 179.500px; }
.l-khach { left: 1342px; top: 15px; }
.n-khach { left: 1295.500px; top: 58px; width: 275.500px; height: 91px; }
.l-san { left: 356px; top: 250px; }
.n-san { left: 266px; top: 293.500px; width: 297px; height: 297.500px; }
.l-loai { left: 812px; top: 324px; }
.n-loai { left: 751px; top: 352.500px; width: 297.500px; height: 121px; }
.l-khuyen { left: 841px; top: 633px; }
.n-khuyen { left: 795px; top: 662px; width: 297.500px; height: 120.500px; }

/* floating cards */
.card { background: #fff; border-radius: 5px; box-shadow: 0 3px 12px rgba(0,0,0,.13); display: flex; align-items: center; }
.title-card { position: absolute; left: 24px; top: 24px; width: 621px; height: 75px; padding: 0 31px 2px 30px; }
.ws-title { flex: 1; font-family: "Montserrat", "Inter", sans-serif; font-size: 24.200px; white-space: nowrap; }
.signup { width: 108px; height: 45px; margin: 1px 24px 0 0; border-radius: 4px; background: #28947f; color: #fff; font-size: 19px; font-weight: 700; }
.download { width: 26px; height: 25px; margin: -3px 18px 0 0; fill: none; stroke: #66788a; stroke-width: 1.900; }
.caret { width: 16px; height: 11px; margin-top: -2px; }
.comment-card { position: absolute; left: 1752px; top: 23px; width: 69px; height: 75px; justify-content: center; padding: 0 1px 2px 0; }
.comment-card svg { width: 38px; height: 30px; fill: none; stroke: #0f2b42; stroke-width: 1.900; }
.fab { position: absolute; left: 23px; top: 703px; width: 84px; height: 84px; border-radius: 50%; background: #28947f; box-shadow: 0 6px 18px rgba(0,0,0,.22); display: grid; place-items: center; padding-bottom: 4px; }
.fab svg { width: 30px; height: 30px; stroke: #fff; stroke-width: 3; stroke-linecap: round; }
.controls { position: absolute; right: 22px; top: 715px; height: 72px; display: flex; align-items: center; }
.controls .card { height: 48px; margin-right: 15px; margin-bottom: 2px; justify-content: center; }
.controls svg { fill: none; stroke-linejoin: round; }
.cloud { width: 34px; height: 26px; margin: 0 17px 6px 0; stroke: #0f2b42; stroke-width: 1.500; }
.controls .tools { width: 105px; gap: 27px; padding: 0 2px 2px 0; }
.tools svg { width: 26px; height: 26px; }
.cursor { stroke: #5bb55b; stroke-width: 1.700; }
.move { stroke: #0f2b42; stroke-width: 1.700; }
.history { width: 108px; gap: 22px; }
.history svg { width: 30px; height: 18px; stroke: #a3afbf; stroke-width: 2; }
.history .fill { fill: #a3afbf; stroke: none; }
.controls .zoomlevel { width: 69px; margin-right: 22px; font-size: 20.500px; padding-bottom: 1px; }
.kbd { width: 41px; height: 26px; margin: 0 29px 5px 0; }
.help { width: 72px; height: 72px; border-radius: 50%; background: rgba(57,74,79,.95); box-shadow: 0 6px 16px rgba(0,0,0,.2); display: grid; place-items: center; color: #fff; font: 300 44px/60px "Open Sans", sans-serif; padding-bottom: 8px; }

/* taskbar */
.taskbar { display: flex; justify-content: space-between; background: linear-gradient(90deg, #f0d2f0 0, #fad3f6 80px, #fad3f6 400px, #f5d0ee 730px, #e0d8f0 800px, #d3dff0 850px, #d3e0f2 1500px, #d2dfe9 1700px, #d3dde9 1920px); color: #1b1b1b; position: relative; }
.taskbar::before { content: ""; position: absolute; left: 0; top: 0; width: 1535px; height: 2px; background: rgba(60,60,110,.09); }
.apps { display: flex; padding-left: 16px; }
.app { position: relative; width: 66px; height: 72px; padding: 19px 0 0 15px; }
.app > svg { width: 36px; height: 36px; position: relative; }
.run::after { content: ""; position: absolute; left: 29px; bottom: 6px; width: 9px; height: 5px; border-radius: 3px; background: #8a7a8c; }
.current::before { content: ""; position: absolute; left: 6px; top: 8px; width: 56px; height: 58px; border-radius: 5px; background: rgba(255,255,255,.55); border: 1px solid rgba(150,110,150,.2); }
.current::after { left: 22px; width: 24px; background: #647a8a; }
.app .kit { position: absolute; border-radius: 50%; border: 1px solid #bbb; }
.app .kit.a { left: 36px; top: 12px; width: 24px; height: 24px; }
.app .kit.b { left: 34px; top: 37px; width: 18px; height: 18px; border: 0; }
.zalo { font: 700 12.500px "Inter", sans-serif; fill: #0a68ff; }
.word { font: 700 14px "Open Sans", sans-serif; fill: #fff; }
.badge { position: absolute; left: 36px; top: 12px; width: 24px; height: 24px; border-radius: 50%; background: #fb0007; color: #fff; font-size: 16px; line-height: 24px; text-align: center; }
.tray { display: flex; align-items: center; padding-right: 30px; font-size: 17px; }
.tray svg { fill: none; stroke: #1b1b1b; stroke-width: 1.600; }
.up { width: 18px; height: 10px; margin-right: 29px; }
.lang { width: 26px; margin-right: 32px; }
.ti { width: 24px; height: 20px; margin-right: 12px; }
.clock { width: 91px; display: flex; flex-direction: column; align-items: flex-end; line-height: 24px; padding-top: 1px; }
.time { letter-spacing: -.35px; }
.notif { width: 24px; height: 26px; margin-left: 17px; border-radius: 50%; background: #5f7580; color: #fff; font-size: 15px; line-height: 26px; text-align: center; }
```
